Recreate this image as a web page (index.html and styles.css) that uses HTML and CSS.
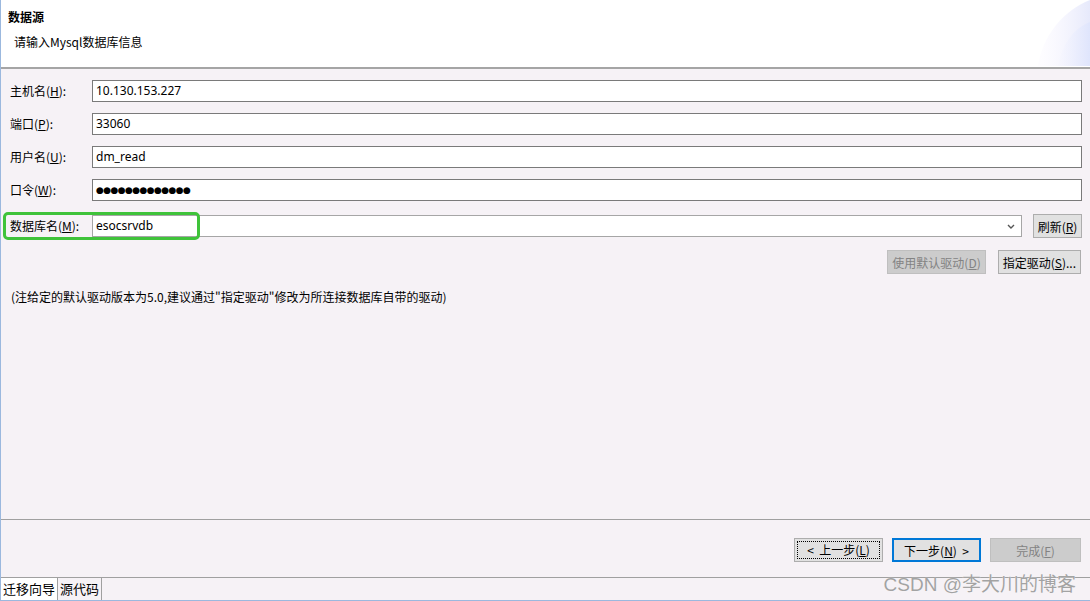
FILE: index.html
```html
<!DOCTYPE html>
<html lang="zh-CN">
<head>
  <meta charset="UTF-8">
  <title>数据源</title>
  <link rel="stylesheet" href="styles.css">
</head>
<body>
  <div class="wizard">
    <div class="header">
      <div class="title">数据源</div>
      <div class="subtitle">请输入Mysql数据库信息</div>
      <svg class="deco" width="62" height="66" viewBox="0 0 62 66">
        <defs>
          <linearGradient id="g1" x1="0" y1="0" x2="1" y2="0">
            <stop offset="0" stop-color="#fbf8ff" stop-opacity="0.3"/>
            <stop offset="1" stop-color="#e6e9fb"/>
          </linearGradient>
          <linearGradient id="g2" x1="0" y1="0" x2="1" y2="0">
            <stop offset="0" stop-color="#f6f6ff" stop-opacity="0.4"/>
            <stop offset="1" stop-color="#dfe5fc"/>
          </linearGradient>
        </defs>
        <path d="M10 66 C14 36 36 10 62 0 L62 66 Z" fill="url(#g1)"/>
        <path d="M30 66 C34 44 46 28 62 22 L62 66 Z" fill="url(#g2)"/>
      </svg>
    </div>

    <div class="form">
      <div class="row">
        <label>主机名(<u>H</u>):</label>
        <div class="field">10.130.153.227</div>
      </div>
      <div class="row">
        <label>端口(<u>P</u>):</label>
        <div class="field">33060</div>
      </div>
      <div class="row">
        <label>用户名(<u>U</u>):</label>
        <div class="field">dm_read</div>
      </div>
      <div class="row">
        <label>口令(<u>W</u>):</label>
        <div class="field password">●●●●●●●●●●●●●</div>
      </div>
      <div class="row db-row">
        <div class="highlight"></div>
        <label>数据库名(<u>M</u>):</label>
        <div class="field combo">
          <span>esocsrvdb</span>
          <svg class="arrow" width="8" height="5" viewBox="0 0 8 5"><path d="M1 1 L4 4 L7 1" fill="none" stroke="#555" stroke-width="1.4"/></svg>
        </div>
        <button class="btn refresh">刷新(<u>R</u>)</button>
      </div>
      <div class="driver-row">
        <button class="btn disabled">使用默认驱动(<u>D</u>)</button>
        <button class="btn">指定驱动(<u>S</u>)...</button>
      </div>
      <div class="note">(注给定的默认驱动版本为5.0,建议通过"指定驱动"修改为所连接数据库自带的驱动)</div>
    </div>

    <div class="footer">
      <button class="btn nav prev"><span class="focus">&lt;&nbsp;&nbsp;上一步(<u>L</u>)</span></button>
      <button class="btn nav next">下一步(<u>N</u>)&nbsp;&nbsp;&gt;</button>
      <button class="btn nav disabled">完成(<u>F</u>)</button>
    </div>

    <div class="tabs">
      <div class="tab active">迁移向导</div>
      <div class="tab">源代码</div>
      <div class="watermark">CSDN @李大川的博客</div>
    </div>
  </div>
</body>
</html>
```

FILE: styles.css
```css
body {
  margin: 0;
  font-family: "Noto Sans CJK SC", "Liberation Sans", sans-serif;
  font-size: 12px;
  color: #000;
  background: #fff;
}
.wizard {
  width: 1089px;
  height: 600px;
  border-left: 1px solid #9bb8de;
  border-bottom: 1px solid #9bb8de;
  background: #f6f2f6;
  display: flex;
  flex-direction: column;
}
.header {
  position: relative;
  height: 69px;
  background: #fff;
  border-bottom: 2px solid #a5a5a5;
  box-sizing: border-box;
  padding: 8px 0 0 7px;
}
.title {
  font-weight: bold;
  line-height: 18px;
}
.subtitle {
  margin: 7px 0 0 6px;
  line-height: 18px;
}
.deco {
  position: absolute;
  right: 0;
  top: 0;
}
.form {
  padding: 11px 8px 0 9px;
}
.row {
  position: relative;
  display: flex;
  align-items: center;
  height: 22px;
  margin-bottom: 11px;
}
.row label {
  width: 82px;
  line-height: 22px;
}
.field {
  flex: 1;
  height: 22px;
  box-sizing: border-box;
  border: 1px solid #7a7a7a;
  background: #fff;
  padding: 0 3px;
  line-height: 20px;
  font-family: "Noto Sans", "Noto Sans CJK SC", sans-serif;
}
.password {
  font-family: "DejaVu Sans", sans-serif;
  font-size: 9px;
  letter-spacing: -0.6px;
  line-height: 20px;
}
.db-row {
  margin-top: 14px;
  margin-bottom: 13px;
}
.combo {
  display: flex;
  align-items: center;
  justify-content: space-between;
  border-color: #a6a6a6;
  margin-right: 11px;
}
.arrow {
  margin-right: 3px;
}
.highlight {
  position: absolute;
  left: -7px;
  top: -3px;
  width: 191px;
  height: 22px;
  border: 3px solid #3fc33a;
  border-radius: 5px;
  pointer-events: none;
}
button {
  font-family: inherit;
  font-size: 12px;
}
.btn {
  height: 24px;
  box-sizing: border-box;
  border: 1px solid #adadad;
  background: #e1e1e1;
  color: #000;
  padding: 0 4px;
}
.refresh {
  width: 49px;
  padding: 0;
}
.btn.disabled {
  background: #cccccc;
  border-color: #bfbfbf;
  color: #838383;
}
.driver-row {
  display: flex;
  justify-content: flex-end;
  gap: 12px;
  padding-right: 1px;
}
.note {
  margin: 14px 0 0 1px;
  line-height: 18px;
}
.footer {
  margin-top: auto;
  height: 58px;
  border-top: 1px solid #a0a0a0;
  display: flex;
  justify-content: flex-end;
  align-items: flex-start;
  gap: 9px;
  padding: 18px 9px 0 0;
  box-sizing: border-box;
}
.nav {
  width: 89px;
  height: 24px;
}
.prev {
  padding: 2px;
}
.prev .focus {
  display: block;
  height: 100%;
  box-sizing: border-box;
  border: 1px dotted #000;
  line-height: 16px;
}
.next {
  border: 2px solid #0078d7;
}
.nav.disabled {
  width: 91px;
}
.tabs {
  position: relative;
  height: 22px;
  border-top: 1px solid #a0a0a0;
  display: flex;
}
.tab {
  padding: 0 2px;
  line-height: 21px;
  font-size: 13px;
  border-right: 1px solid #a0a0a0;
}
.tab.active {
  background: #fff;
}
.watermark {
  position: absolute;
  right: 14px;
  top: -9px;
  font-size: 19px;
  color: #a3a3a3;
  font-family: "Liberation Sans", "Noto Sans CJK SC", sans-serif;
  text-shadow: 0 0 1px #fff;
}
```
